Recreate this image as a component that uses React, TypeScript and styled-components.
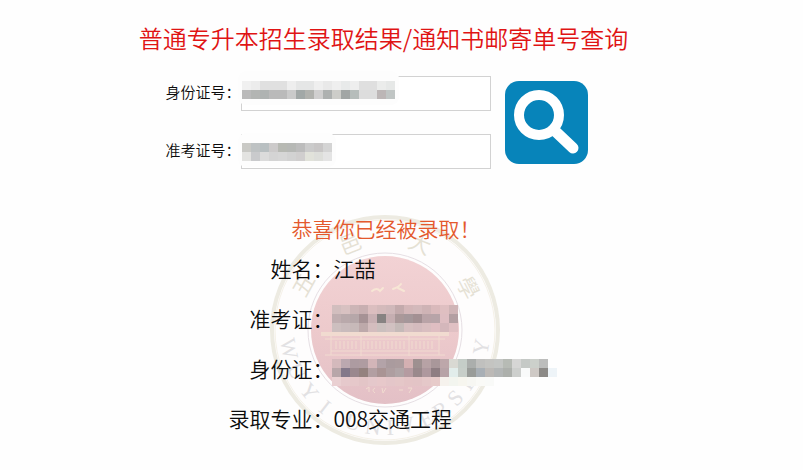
import React from 'react';
import styled, { createGlobalStyle } from 'styled-components';

const GlobalStyle = createGlobalStyle`
  * { box-sizing: border-box; }
  body {
    margin: 0;
    background: #fefefe;
    color: #0c0c0c;
    font-family: "Noto Sans CJK SC", sans-serif;
    font-weight: 350;
  }
`;

const Page = styled.main`
  display: flex;
  flex-direction: column;
  align-items: center;
  padding: 20px 36px 20px 0;
`;

const Title = styled.h1`
  margin: 0;
  color: #e01414;
  font-size: 24px;
  line-height: 36px;
  font-weight: inherit;
`;

const SearchForm = styled.form`
  display: flex;
  align-items: center;
  gap: 14px;
  margin-top: 20px;
  padding-right: 14px;
`;

const Fields = styled.div`
  display: grid;
  grid-template-columns: auto 250px;
  align-items: center;
  row-gap: 23px;
`;

const FieldLabel = styled.label`
  padding-bottom: 4px;
  font-size: 15px;
  line-height: 22px;
`;

const FieldBox = styled.div`
  position: relative;
`;

const FieldInput = styled.input`
  display: block;
  width: 100%;
  height: 35px;
  padding: 0 8px;
  border: 1px solid #d2d2d2;
  background: #fff;
  font: inherit;
`;

const FieldMask = styled.div<{ $top: number; $pad: number }>`
  position: absolute;
  top: ${(p) => p.$top}px;
  left: -3px;
  padding: ${(p) => p.$pad}px 4px 6px;
  border-radius: 8px;
  background: #fdfdfd;
  pointer-events: none;
`;

const Cells = styled.div<{ $columns: number }>`
  display: grid;
  grid-template-columns: repeat(${(p) => p.$columns}, 9px);
  grid-auto-rows: 9px;
`;

const Cell = styled.span<{ $color: string }>`
  background: ${(p) => p.$color};
`;

const SearchButton = styled.button`
  width: 83px;
  height: 83px;
  padding: 0;
  border: 0;
  border-radius: 14px;
  background: #0784ba;
  cursor: pointer;

  svg {
    display: block;
  }
`;

const Result = styled.section`
  position: relative;
  width: 330px;
  margin-top: 44px;
`;

const Seal = styled.svg`
  position: absolute;
  top: 0;
  left: 50%;
  width: 234px;
  height: 234px;
  margin-left: -116px;
`;

const Notice = styled.p`
  position: relative;
  margin: 0;
  padding-left: 73px;
  color: #e4592d;
  font-size: 21px;
  line-height: 30px;
`;

const Details = styled.dl`
  position: relative;
  display: grid;
  grid-template-columns: 115px 1fr;
  grid-auto-rows: 50px;
  align-items: center;
  margin: 0;
  font-size: 21px;
  line-height: 32px;
  white-space: nowrap;
`;

const Term = styled.dt`
  text-align: right;
`;

const Value = styled.dd<{ $masked?: boolean }>`
  margin: 0 0 0 ${(p) => (p.$masked ? '-2px' : '0')};
`;

const mosaics = {
  id: [
    'f0f0f0 ececec e0e0e0 e0e0e0 e0e0e0 eeeeee e5e6e6 e5e6e6 efefef e9e9e9 efefef e8eaea eeeeee dfdfdf dfdfdf ebeceb e6e8e7',
    'bababa b3b5b3 afb3b2 bababa bababa cacaca a2a8a7 b1b2ae d0cfcf aeb1b0 cdcdc9 a2a6a5 b6bdbb dddddd dddddd bcb6b6 c0c5c4',
  ],
  ticket: [
    'c9c9c5 bec2c3 b8bfc1 cccaca b7b9b3 b6b8b5 bcbcbc cbcbcb c8c6c6 d4d4d4',
    'e3e3e1 c9cacc dbdbdb d4d4d4 d6d6d6 d2d2d2 d0cece e1e2da dddeda e4e4e4',
  ],
  resultTicket: [
    'd2bebe d8c1c1 ccb5b6 c8afb1 dbbebf d4babb d0b8ba c3aaac d3b6b8 d3b9bb ceb3b5 d9b9bb dfbfc1 cfb4b6',
    'c0aeb0 b9a9ab b6a7a9 a69295 c8b0b3 878382 c5aeb1 aa9899 a5979a a39093 b9a3a7 b7a4a8 debec2 b39fa2',
    'cdbfbf c9bbbc c7b9b9 bda9aa d4bdbe cbc0be d1c1c1 c5bab8 d6bfc0 d4bbbe d9bec0 dfbec2 d4b7bb e0c0c3',
  ],
  resultId: [
    '- - - - - - - - - - - - - - - - - - - - - - - - -',
    'd4b9bc bba8b0 ad9ba1 af9ca1 d2b5b8 b3a3a8 aa9b9e ac9c9e d4b0b2 9e9090 b7a2a5 a9979a bda7aa d9d9d3 c5cdc8 abaeac c0c0be c4c4c1 c4c6c4 b7bbb5 d6d6d5 c5c9c6 ccd0cb bcbdbc -',
    'b8a6a9 83788a 9a888e 94827f b29fa2 a99494 ae9ea0 b1a5a7 b59ba1 9a898c ae989e 8e7d82 b7a3a7 e2edeb c7cec9 999c99 a8afb5 bcb9b6 b3b6b6 adb0ac cdcfcd f9fafa cec9c5 8c8a87 eef4f8',
    'ead0d2 e6c9cc e6c8ca e3c5c7 e5c8cb e7c8ca e4c6c9 e5c7c8 e4c4c6 e3c4c6 e5c8c9 e7cbca f6f2ed f3f5ef f7f6ef f7f7f3 fafaf7 f9faf8 - - - - - - -',
  ],
};

function Mosaic({ rows }: { rows: string[] }) {
  const grid = rows.map((row) => row.split(' '));
  return (
    <Cells $columns={grid[0].length} aria-hidden="true">
      {grid.flatMap((row, y) =>
        row.map((c, x) => <Cell key={`${y}-${x}`} $color={c === '-' ? 'transparent' : `#${c}`} />),
      )}
    </Cells>
  );
}

const sealLatin: [string, number][] = [
  ['W', 79], ['U', 65], ['Y', 51], ['I', 38],
  ['U', 19], ['N', 7], ['I', -3], ['V', -13], ['E', -25],
  ['R', -35], ['S', -46], ['I', -56], ['T', -66], ['Y', -80],
];

const sealHan: [string, number][] = [['五', -61], ['邑', -22], ['大', 22], ['學', 63]];

function UniversitySeal() {
  return (
    <Seal viewBox="-117 -117 234 234" aria-hidden="true">
      <defs>
        <linearGradient id="sealFill" x1="0" y1="0" x2="0" y2="1">
          <stop offset="0" stopColor="#f2d2d4" />
          <stop offset="0.5" stopColor="#edcacc" />
          <stop offset="1" stopColor="#e3c0c6" />
        </linearGradient>
      </defs>
      <circle r="113" fill="#fefdfd" stroke="#edebe2" strokeWidth="4" />
      <circle r="110" fill="none" stroke="#f5f1e8" strokeWidth="1" />
      <circle r="77" fill="none" stroke="#e6dfe4" strokeWidth="1" />
      <circle r="74" fill="url(#sealFill)" />
      <g fill="none" stroke="#f7e6d5" strokeLinecap="round">
        <path d="M-13 -39q5 -4 8 0l3 -3M8 -41q6 -2 8 -5M13 -42l6 3" strokeWidth="2" />
      </g>
      <g fill="none" stroke="#f1dbd0">
        <path d="M-64 4H64" strokeWidth="4" />
        <path d="M-60 9H60M-54 21H54M-60 25H60" strokeWidth="1" />
        <path d="M-24 3V26M24 3V26M-54 5V25M54 5V25" strokeWidth="1" />
        <path d="M-50 15H-26M-22 15H22M26 15H50" strokeWidth="8" strokeDasharray="2 2" opacity="0.5" />
        <path d="M-19 59l3 -2v5M-10 58q-4 2 0 5M-3 58l1 5 3 -5M14 60h4M23 58h4l-3 5" strokeWidth="1" />
      </g>
      <g textAnchor="middle" fontFamily="Liberation Serif, serif" fontSize="22" fill="#e2e1e3">
        {sealLatin.map(([letter, angle], i) => (
          <text key={i} y="105" transform={`rotate(${angle})`}>{letter}</text>
        ))}
      </g>
      <g textAnchor="middle" fontSize="22" fill="#e5e1d4">
        {sealHan.map(([letter, angle]) => (
          <text key={letter} y="-85" transform={`rotate(${angle})`}>{letter}</text>
        ))}
      </g>
    </Seal>
  );
}

export default function App() {
  return (
    <>
      <GlobalStyle />
      <Page>
        <Title>普通专升本招生录取结果/通知书邮寄单号查询</Title>
        <SearchForm>
          <Fields>
            <FieldLabel htmlFor="id-number">身份证号：</FieldLabel>
            <FieldBox>
              <FieldInput id="id-number" type="text" />
              <FieldMask $top={-5} $pad={10}>
                <Mosaic rows={mosaics.id} />
              </FieldMask>
            </FieldBox>
            <FieldLabel htmlFor="ticket-number">准考证号：</FieldLabel>
            <FieldBox>
              <FieldInput id="ticket-number" type="text" />
              <FieldMask $top={-1} $pad={10}>
                <Mosaic rows={mosaics.ticket} />
              </FieldMask>
            </FieldBox>
          </Fields>
          <SearchButton type="button" aria-label="查询">
            <svg viewBox="0 0 83 83" width="83" height="83" fill="none" stroke="#fff">
              <circle cx="34" cy="34" r="20" strokeWidth="10" />
              <path d="M49 49L68 67" strokeWidth="11" strokeLinecap="round" />
            </svg>
          </SearchButton>
        </SearchForm>
        <Result>
          <UniversitySeal />
          <Notice>恭喜你已经被录取！</Notice>
          <Details>
            <Term>姓名：</Term>
            <Value>江喆</Value>
            <Term>准考证：</Term>
            <Value $masked><Mosaic rows={mosaics.resultTicket} /></Value>
            <Term>身份证：</Term>
            <Value $masked><Mosaic rows={mosaics.resultId} /></Value>
            <Term>录取专业：</Term>
            <Value>008交通工程</Value>
          </Details>
        </Result>
      </Page>
    </>
  );
}
